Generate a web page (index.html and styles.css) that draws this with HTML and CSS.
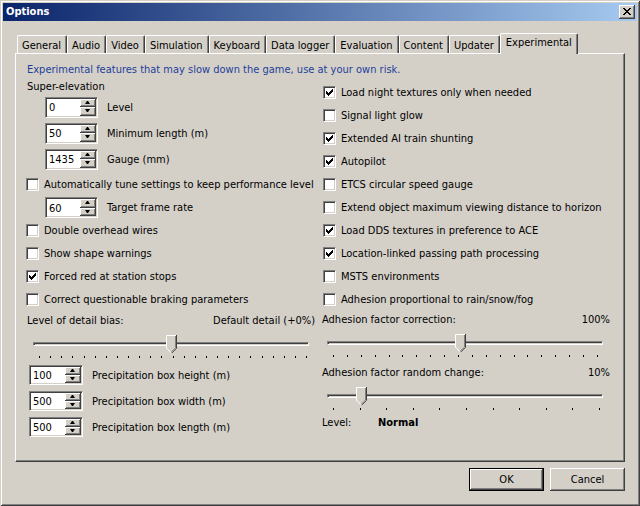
FILE: index.html
```html
<!DOCTYPE html>
<html>
<head>
<meta charset="utf-8">
<title>Options</title>
<link rel="stylesheet" href="styles.css">
</head>
<body>
<div class="window">
  <div class="titlebar">
    <span class="title">Options</span>
    <span class="close"><svg width="8" height="7" viewBox="0 0 8 7"><path fill="#000" d="M0 0h2v1H0zM6 0h2v1H6zM1 1h2v1H1zM5 1h2v1H5zM2 2h4v1H2zM3 3h2v1H3zM2 4h4v1H2zM1 5h2v1H1zM5 5h2v1H5zM0 6h2v1H0zM6 6h2v1H6z"/></svg></span>
  </div>

  <div class="tabs">
    <span class="tab">General</span>
    <span class="tab">Audio</span>
    <span class="tab">Video</span>
    <span class="tab">Simulation</span>
    <span class="tab">Keyboard</span>
    <span class="tab">Data logger</span>
    <span class="tab">Evaluation</span>
    <span class="tab">Content</span>
    <span class="tab">Updater</span>
    <span class="tab active">Experimental</span>
  </div>

  <div class="panel">
    <p class="info">Experimental features that may slow down the game, use at your own risk.</p>
    <div class="cols">
      <div class="col col-left">
        <div class="heading">Super-elevation</div>
        <div class="spin-row">
          <span class="spin"><span class="spin-val">0</span><span class="ud"><i class="up"></i><i class="dn"></i></span></span>
          <span class="spin-lbl">Level</span>
        </div>
        <div class="spin-row">
          <span class="spin"><span class="spin-val">50</span><span class="ud"><i class="up"></i><i class="dn"></i></span></span>
          <span class="spin-lbl">Minimum length (m)</span>
        </div>
        <div class="spin-row">
          <span class="spin"><span class="spin-val">1435</span><span class="ud"><i class="up"></i><i class="dn"></i></span></span>
          <span class="spin-lbl">Gauge (mm)</span>
        </div>
        <div class="cb-row tall"><span class="cb"></span><span class="cb-lbl">Automatically tune settings to keep performance level</span></div>
        <div class="spin-row short">
          <span class="spin"><span class="spin-val">60</span><span class="ud"><i class="up"></i><i class="dn"></i></span></span>
          <span class="spin-lbl">Target frame rate</span>
        </div>
        <div class="cb-row"><span class="cb"></span><span class="cb-lbl">Double overhead wires</span></div>
        <div class="cb-row"><span class="cb"></span><span class="cb-lbl">Show shape warnings</span></div>
        <div class="cb-row"><span class="cb"><svg class="tick" width="11" height="11" viewBox="1 1 11 11"><path d="M3 5h1v1h1v1h1v-1h1v-1h1v-1h1v-1h1v3h-1v1h-1v1h-1v1h-1v1h-1v-1h-1v-1h-1z"/></svg></span><span class="cb-lbl">Forced red at station stops</span></div>
        <div class="cb-row"><span class="cb"></span><span class="cb-lbl">Correct questionable braking parameters</span></div>

        <div class="val-row"><span>Level of detail bias:</span><span>Default detail (+0%)</span></div>
        <div class="slider">
          <div class="track"></div>
          <div class="ticks t25">
            <i></i><i></i><i></i><i></i><i></i><i></i><i></i><i></i><i></i><i></i><i></i><i></i><i></i><i></i><i></i><i></i><i></i><i></i><i></i><i></i><i></i><i></i><i></i><i></i><i></i>
          </div>
          <svg class="thumb" style="left:140px" width="11" height="18" viewBox="0 0 11 18"><path fill="#D4D0C8" d="M0 0H11V13L5.5 18.5L0 13Z"/><path fill="none" stroke="#fff" d="M0.5 13.5V0.5H10"/><path fill="none" stroke="#fff" d="M0.5 13.2L5 17.7"/><path fill="none" stroke="#404040" d="M10.5 0V13.3L5.8 18"/><path fill="none" stroke="#808080" d="M9.5 1V13L5.3 17"/></svg>
        </div>

        <div class="precip-group">
          <div class="spin-row precip">
            <span class="spin small"><span class="spin-val">100</span><span class="ud"><i class="up"></i><i class="dn"></i></span></span>
            <span class="spin-lbl">Precipitation box height (m)</span>
          </div>
          <div class="spin-row precip">
            <span class="spin small"><span class="spin-val">500</span><span class="ud"><i class="up"></i><i class="dn"></i></span></span>
            <span class="spin-lbl">Precipitation box width (m)</span>
          </div>
          <div class="spin-row precip">
            <span class="spin small"><span class="spin-val">500</span><span class="ud"><i class="up"></i><i class="dn"></i></span></span>
            <span class="spin-lbl">Precipitation box length (m)</span>
          </div>
        </div>
      </div>

      <div class="col col-right">
        <div class="cb-row"><span class="cb"><svg class="tick" width="11" height="11" viewBox="1 1 11 11"><path d="M3 5h1v1h1v1h1v-1h1v-1h1v-1h1v-1h1v3h-1v1h-1v1h-1v1h-1v1h-1v-1h-1v-1h-1z"/></svg></span><span class="cb-lbl">Load night textures only when needed</span></div>
        <div class="cb-row"><span class="cb"></span><span class="cb-lbl">Signal light glow</span></div>
        <div class="cb-row"><span class="cb"><svg class="tick" width="11" height="11" viewBox="1 1 11 11"><path d="M3 5h1v1h1v1h1v-1h1v-1h1v-1h1v-1h1v3h-1v1h-1v1h-1v1h-1v1h-1v-1h-1v-1h-1z"/></svg></span><span class="cb-lbl">Extended AI train shunting</span></div>
        <div class="cb-row"><span class="cb"><svg class="tick" width="11" height="11" viewBox="1 1 11 11"><path d="M3 5h1v1h1v1h1v-1h1v-1h1v-1h1v-1h1v3h-1v1h-1v1h-1v1h-1v1h-1v-1h-1v-1h-1z"/></svg></span><span class="cb-lbl">Autopilot</span></div>
        <div class="cb-row"><span class="cb"></span><span class="cb-lbl">ETCS circular speed gauge</span></div>
        <div class="cb-row"><span class="cb"></span><span class="cb-lbl">Extend object maximum viewing distance to horizon</span></div>
        <div class="cb-row"><span class="cb"><svg class="tick" width="11" height="11" viewBox="1 1 11 11"><path d="M3 5h1v1h1v1h1v-1h1v-1h1v-1h1v-1h1v3h-1v1h-1v1h-1v1h-1v1h-1v-1h-1v-1h-1z"/></svg></span><span class="cb-lbl">Load DDS textures in preference to ACE</span></div>
        <div class="cb-row"><span class="cb"><svg class="tick" width="11" height="11" viewBox="1 1 11 11"><path d="M3 5h1v1h1v1h1v-1h1v-1h1v-1h1v-1h1v3h-1v1h-1v1h-1v1h-1v1h-1v-1h-1v-1h-1z"/></svg></span><span class="cb-lbl">Location-linked passing path processing</span></div>
        <div class="cb-row"><span class="cb"></span><span class="cb-lbl">MSTS environments</span></div>
        <div class="cb-row"><span class="cb"></span><span class="cb-lbl">Adhesion proportional to rain/snow/fog</span></div>

        <div class="val-row"><span>Adhesion factor correction:</span><span>100%</span></div>
        <div class="slider">
          <div class="track"></div>
          <div class="ticks t20">
            <i></i><i></i><i></i><i></i><i></i><i></i><i></i><i></i><i></i><i></i><i></i><i></i><i></i><i></i><i></i><i></i><i></i><i></i><i></i><i></i>
          </div>
          <svg class="thumb" style="left:133px" width="11" height="18" viewBox="0 0 11 18"><path fill="#D4D0C8" d="M0 0H11V13L5.5 18.5L0 13Z"/><path fill="none" stroke="#fff" d="M0.5 13.5V0.5H10"/><path fill="none" stroke="#fff" d="M0.5 13.2L5 17.7"/><path fill="none" stroke="#404040" d="M10.5 0V13.3L5.8 18"/><path fill="none" stroke="#808080" d="M9.5 1V13L5.3 17"/></svg>
        </div>

        <div class="val-row second"><span>Adhesion factor random change:</span><span>10%</span></div>
        <div class="slider">
          <div class="track"></div>
          <div class="ticks t11">
            <i></i><i></i><i></i><i></i><i></i><i></i><i></i><i></i><i></i><i></i><i></i>
          </div>
          <svg class="thumb" style="left:34px" width="11" height="18" viewBox="0 0 11 18"><path fill="#D4D0C8" d="M0 0H11V13L5.5 18.5L0 13Z"/><path fill="none" stroke="#fff" d="M0.5 13.5V0.5H10"/><path fill="none" stroke="#fff" d="M0.5 13.2L5 17.7"/><path fill="none" stroke="#404040" d="M10.5 0V13.3L5.8 18"/><path fill="none" stroke="#808080" d="M9.5 1V13L5.3 17"/></svg>
        </div>

        <div class="level-row"><span class="level-lbl">Level:</span><b>Normal</b></div>
      </div>
    </div>
  </div>

  <div class="buttons">
    <button class="btn default">OK</button>
    <button class="btn">Cancel</button>
  </div>
</div>
</body>
</html>
```

FILE: styles.css
```css
* { box-sizing: border-box; }

html, body {
  margin: 0;
  padding: 0;
}

body {
  width: 640px;
  height: 506px;
  overflow: hidden;
  background: #D4D0C8;
  color: #000;
  font-family: "DejaVu Sans Condensed", "DejaVu Sans", sans-serif;
  font-stretch: condensed;
  font-size: 11px;
}

.window {
  width: 640px;
  height: 506px;
  padding: 3px;
  background: #D4D0C8;
  box-shadow: inset 1px 1px #D4D0C8, inset -1px -1px #404040, inset 2px 2px #fff, inset -2px -2px #808080;
  display: flex;
  flex-direction: column;
}

/* title bar */
.titlebar {
  height: 18px;
  flex: none;
  display: flex;
  align-items: flex-start;
  justify-content: space-between;
  padding: 0 2px 0 3px;
  background: linear-gradient(to right, #0A246A, #A6CAF0);
}

.title {
  color: #fff;
  font-weight: bold;
  line-height: 18px;
}

.close {
  display: block;
  width: 16px;
  height: 14px;
  margin-top: 2px;
  padding: 3px 0 0 4px;
  background: #D4D0C8;
  box-shadow: inset -1px -1px #404040, inset 1px 1px #fff, inset -2px -2px #808080;
}

.close svg { display: block; }

/* tabs */
.tabs {
  height: 32px;
  flex: none;
  display: flex;
  align-items: flex-end;
  padding-left: 14px;
}

.tab {
  height: 18px;
  padding: 3px 5px 0 4px;
  line-height: 14px;
  white-space: nowrap;
  border: 1px solid;
  border-color: #fff #404040 transparent #fff;
  border-bottom: 0;
  border-radius: 2px 2px 0 0;
  box-shadow: inset -1px 0 #808080;
}

.tab.active {
  position: relative;
  z-index: 1;
  height: 21px;
  margin-bottom: -1px;
  padding: 2px 5px 0 5px;
  background: #D4D0C8;
}

/* panel */
.panel {
  height: 409px;
  flex: none;
  margin: 0 12px;
  padding: 9px 0 0 10px;
  border: 1px solid;
  border-color: #fff #404040 #404040 #fff;
  box-shadow: inset -1px -1px #808080;
}

.info {
  margin: 0;
  padding-left: 1px;
  line-height: 14px;
  height: 14px;
  color: #22409A;
}

.cols {
  display: flex;
}

.col-left { width: 296px; margin-top: -1px; }
.col-right { width: 290px; padding-top: 4px; }

.heading {
  height: 15px;
  line-height: 15px;
  margin-top: 3px;
  padding-left: 1px;
}

/* spinner */
.spin-row {
  height: 26px;
  display: flex;
  align-items: center;
  padding-left: 19px;
}

.spin-row.short { height: 23px; }

.precip-group { margin-top: 2px; }
.spin-row.precip { padding-left: 3px; }

.spin {
  width: 53px;
  height: 21px;
  display: flex;
  justify-content: space-between;
  background: #fff;
  border: 1px solid;
  border-color: #808080 #fff #fff #808080;
  box-shadow: inset 1px 1px #404040, inset -1px -1px #D4D0C8;
  padding: 1px;
}

.spin.small { width: 54px; height: 20px; }

.spin-val {
  padding-left: 2px;
  align-self: center;
  line-height: 13px;
  margin-top: 1px;
}

.ud {
  width: 16px;
  display: flex;
  flex-direction: column;
}

.ud i {
  flex: 1;
  position: relative;
  background: #D4D0C8;
  box-shadow: inset -1px -1px #404040, inset 1px 1px #fff, inset -2px -2px #808080;
}

.ud i::after {
  content: "";
  position: absolute;
  left: 5px;
  width: 1px;
  height: 0;
  border-left: 2px solid transparent;
  border-right: 2px solid transparent;
}

.ud .up::after { top: 2px; border-bottom: 3px solid #000; }
.ud .dn::after { top: 2px; border-top: 3px solid #000; }

.spin-lbl { margin-left: 9px; }

/* checkbox */
.cb-row {
  height: 23px;
  display: flex;
  align-items: center;
}

.cb-row.tall { height: 24px; }
.col-right .cb-row { padding-left: 1px; }

.cb {
  width: 13px;
  height: 13px;
  flex: none;
  background: #fff;
  border: 1px solid;
  border-color: #808080 #fff #fff #808080;
  box-shadow: inset 1px 1px #404040, inset -1px -1px #D4D0C8;
}

.tick { display: block; fill: #000; }

.cb-lbl { margin-left: 5px; white-space: nowrap; }

/* slider */
.val-row {
  height: 14px;
  line-height: 14px;
  margin-top: 3px;
  display: flex;
  justify-content: space-between;
  white-space: nowrap;
}

.col-left .val-row { padding: 0 7px 0 1px; }
.col-right .val-row { padding: 0 2px 0 0; margin-top: 2px; }
.col-right .val-row.second { margin-top: 7px; }

.slider {
  position: relative;
  height: 32px;
  padding-top: 14px;
}

.track {
  height: 4px;
  width: 276px;
  margin-left: 7px;
  border: 1px solid;
  border-color: #808080 #fff #fff #808080;
  box-shadow: inset 1px 1px #404040, inset -1px -1px #D4D0C8;
}

.col-right .track { margin-left: 5px; }

.ticks {
  display: flex;
  justify-content: space-between;
  margin-top: 10px;
}

.ticks i {
  width: 1px;
  height: 2px;
  background: #000;
}

.ticks.t25 { margin-left: 13px; width: 268px; }
.ticks.t20 { margin-left: 11px; width: 265px; }
.ticks.t11 { margin-left: 11px; width: 267px; }

.thumb {
  position: absolute;
  top: 7px;
  display: block;
}

.level-row {
  height: 14px;
  line-height: 14px;
  margin-top: 4px;
  display: flex;
}

.level-lbl { width: 56px; }

/* buttons */
.buttons {
  display: flex;
  justify-content: flex-end;
  gap: 6px;
  margin: 6px 12px 0 0;
}

.btn {
  width: 75px;
  height: 23px;
  padding: 0;
  font: inherit;
  color: #000;
  background: #D4D0C8;
  border: 0;
  box-shadow: inset -1px -1px #404040, inset 1px 1px #fff, inset -2px -2px #808080;
}

.btn.default {
  border: 1px solid #000;
}
```
